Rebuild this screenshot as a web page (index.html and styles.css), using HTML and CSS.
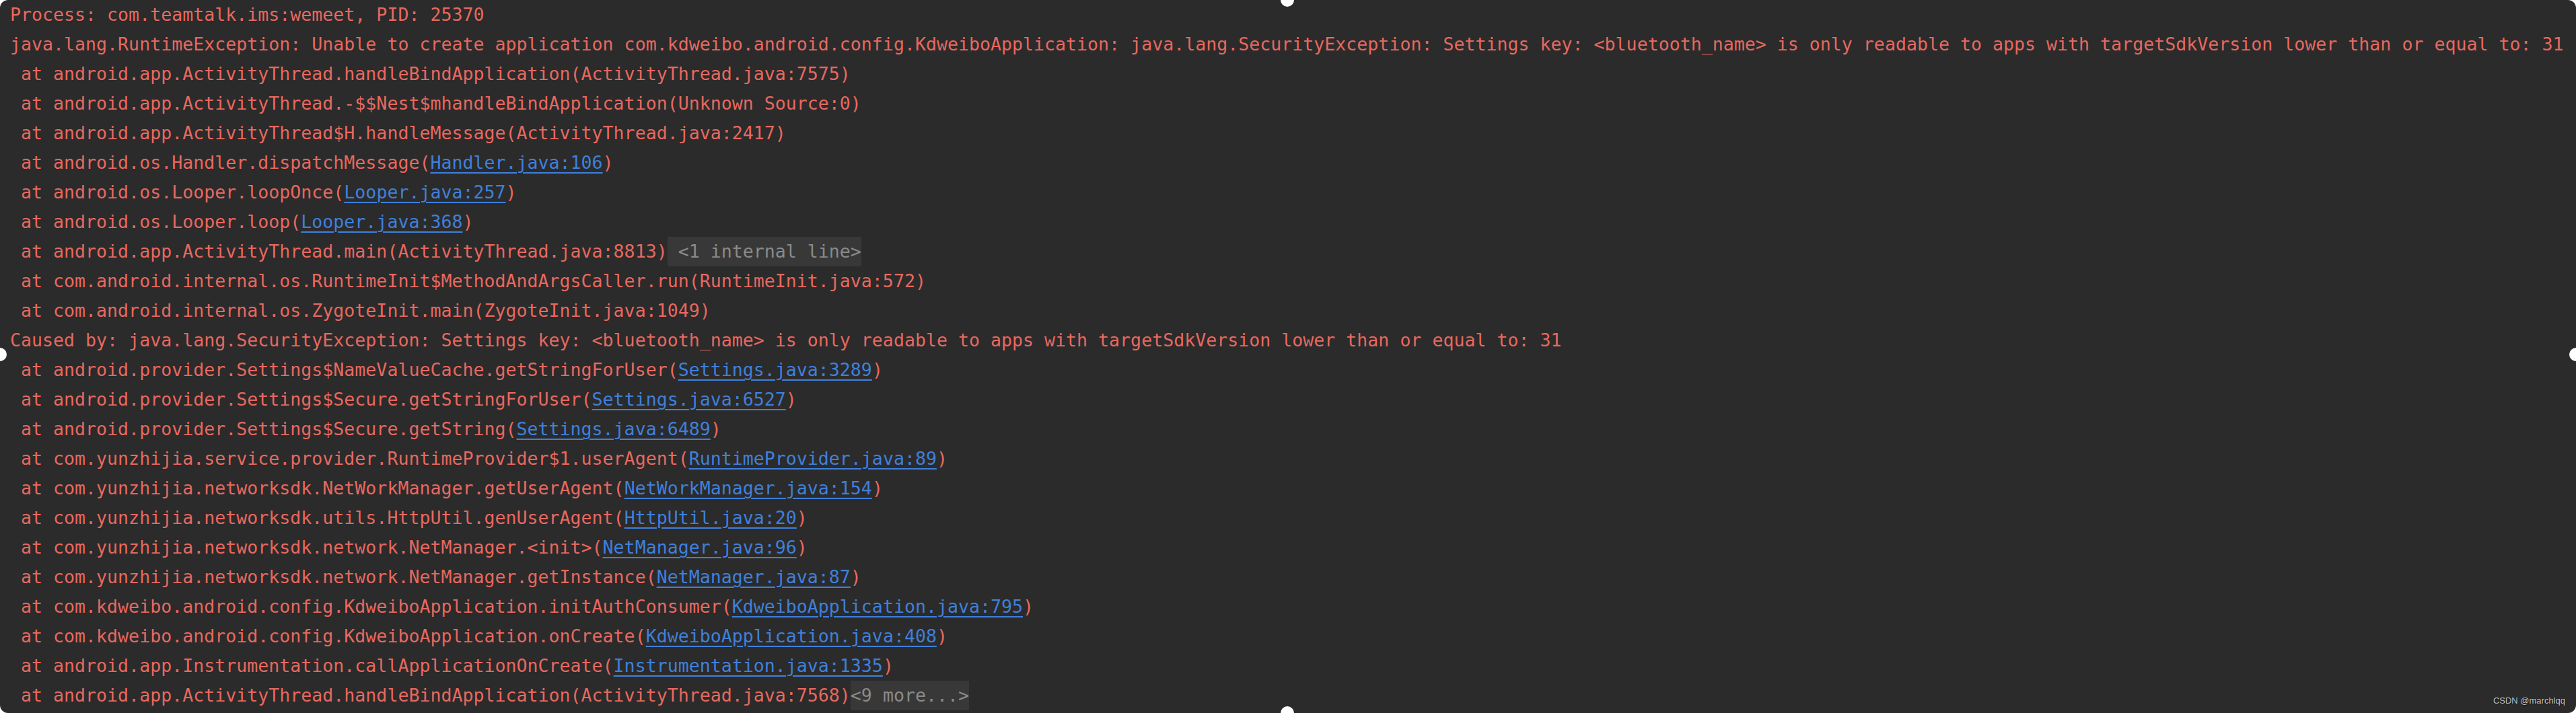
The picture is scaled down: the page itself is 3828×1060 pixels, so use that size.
FILE: index.html
```html
<!DOCTYPE html>
<html lang="en">
<head>
    <meta charset="UTF-8">
    <meta name="viewport" content="width=device-width, initial-scale=1.0">
    <title>Logcat - crash</title>
    <link rel="stylesheet" href="styles.css">
</head>
<body>

<div class="console">
    <!-- stack trace output -->
    <div class="log">
        <div class="line">Process: com.teamtalk.ims:wemeet, PID: 25370</div>
        <div class="line">java.lang.RuntimeException: Unable to create application com.kdweibo.android.config.KdweiboApplication: java.lang.SecurityException: Settings key: &lt;bluetooth_name&gt; is only readable to apps with targetSdkVersion lower than or equal to: 31</div>
        <div class="line"> at android.app.ActivityThread.handleBindApplication(ActivityThread.java:7575)</div>
        <div class="line"> at android.app.ActivityThread.-$$Nest$mhandleBindApplication(Unknown Source:0)</div>
        <div class="line"> at android.app.ActivityThread$H.handleMessage(ActivityThread.java:2417)</div>
        <div class="line"> at android.os.Handler.dispatchMessage(<a class="link">Handler.java:106</a>)</div>
        <div class="line"> at android.os.Looper.loopOnce(<a class="link">Looper.java:257</a>)</div>
        <div class="line"> at android.os.Looper.loop(<a class="link">Looper.java:368</a>)</div>
        <div class="line"> at android.app.ActivityThread.main(ActivityThread.java:8813)<span class="fold"> &lt;1 internal line&gt;</span></div>
        <div class="line"> at com.android.internal.os.RuntimeInit$MethodAndArgsCaller.run(RuntimeInit.java:572)</div>
        <div class="line"> at com.android.internal.os.ZygoteInit.main(ZygoteInit.java:1049)</div>
        <div class="line">Caused by: java.lang.SecurityException: Settings key: &lt;bluetooth_name&gt; is only readable to apps with targetSdkVersion lower than or equal to: 31</div>
        <div class="line"> at android.provider.Settings$NameValueCache.getStringForUser(<a class="link">Settings.java:3289</a>)</div>
        <div class="line"> at android.provider.Settings$Secure.getStringForUser(<a class="link">Settings.java:6527</a>)</div>
        <div class="line"> at android.provider.Settings$Secure.getString(<a class="link">Settings.java:6489</a>)</div>
        <div class="line"> at com.yunzhijia.service.provider.RuntimeProvider$1.userAgent(<a class="link">RuntimeProvider.java:89</a>)</div>
        <div class="line"> at com.yunzhijia.networksdk.NetWorkManager.getUserAgent(<a class="link">NetWorkManager.java:154</a>)</div>
        <div class="line"> at com.yunzhijia.networksdk.utils.HttpUtil.genUserAgent(<a class="link">HttpUtil.java:20</a>)</div>
        <div class="line"> at com.yunzhijia.networksdk.network.NetManager.&lt;init&gt;(<a class="link">NetManager.java:96</a>)</div>
        <div class="line"> at com.yunzhijia.networksdk.network.NetManager.getInstance(<a class="link">NetManager.java:87</a>)</div>
        <div class="line"> at com.kdweibo.android.config.KdweiboApplication.initAuthConsumer(<a class="link">KdweiboApplication.java:795</a>)</div>
        <div class="line"> at com.kdweibo.android.config.KdweiboApplication.onCreate(<a class="link">KdweiboApplication.java:408</a>)</div>
        <div class="line"> at android.app.Instrumentation.callApplicationOnCreate(<a class="link">Instrumentation.java:1335</a>)</div>
        <div class="line"> at android.app.ActivityThread.handleBindApplication(ActivityThread.java:7568)<span class="fold">&lt;9 more...&gt;</span></div>
    </div>

    <!-- selection handles -->
    <span class="handle handle-top"></span>
    <span class="handle handle-bottom"></span>
    <span class="handle handle-left"></span>
    <span class="handle handle-right"></span>

    <div class="watermark">CSDN @marchlqq</div>
</div>

</body>
</html>
```

FILE: styles.css
```css
body {
    margin: 0;
    padding: 0;
    background-color: #fff;
    overflow: hidden;
}

.console {
    position: relative;
    width: 3828px;
    height: 1060px;
    background-color: #2b2b2b;
    border-radius: 12px;
    overflow: hidden;
}

.log {
    padding-left: 15px;
    font-family: 'DejaVu Sans Mono', 'Liberation Mono', monospace;
    font-size: 26.6px;
    color: #e8685f;
}

.line {
    height: 44px;
    line-height: 44px;
    white-space: pre;
}

.link {
    color: #3f80dc;
    text-decoration: underline;
    text-decoration-thickness: 2px;
    text-underline-offset: 5px;
}

.fold {
    display: inline-block;
    height: 44px;
    background-color: #383838;
    color: #8a8a8a;
    vertical-align: top;
}

.handle {
    position: absolute;
    width: 20px;
    height: 20px;
    border-radius: 50%;
    background-color: #fff;
}

.handle-top {
    top: -10px;
    left: 1903px;
}

.handle-bottom {
    bottom: -10px;
    left: 1903px;
}

.handle-left {
    left: -10px;
    top: 517px;
}

.handle-right {
    right: -10px;
    top: 517px;
}

.watermark {
    position: absolute;
    right: 16px;
    bottom: 11px;
    font-family: 'Liberation Sans', Arial, sans-serif;
    font-size: 13px;
    color: #c4c4c4;
    text-shadow: 1px 1px 1px #111;
}
```
